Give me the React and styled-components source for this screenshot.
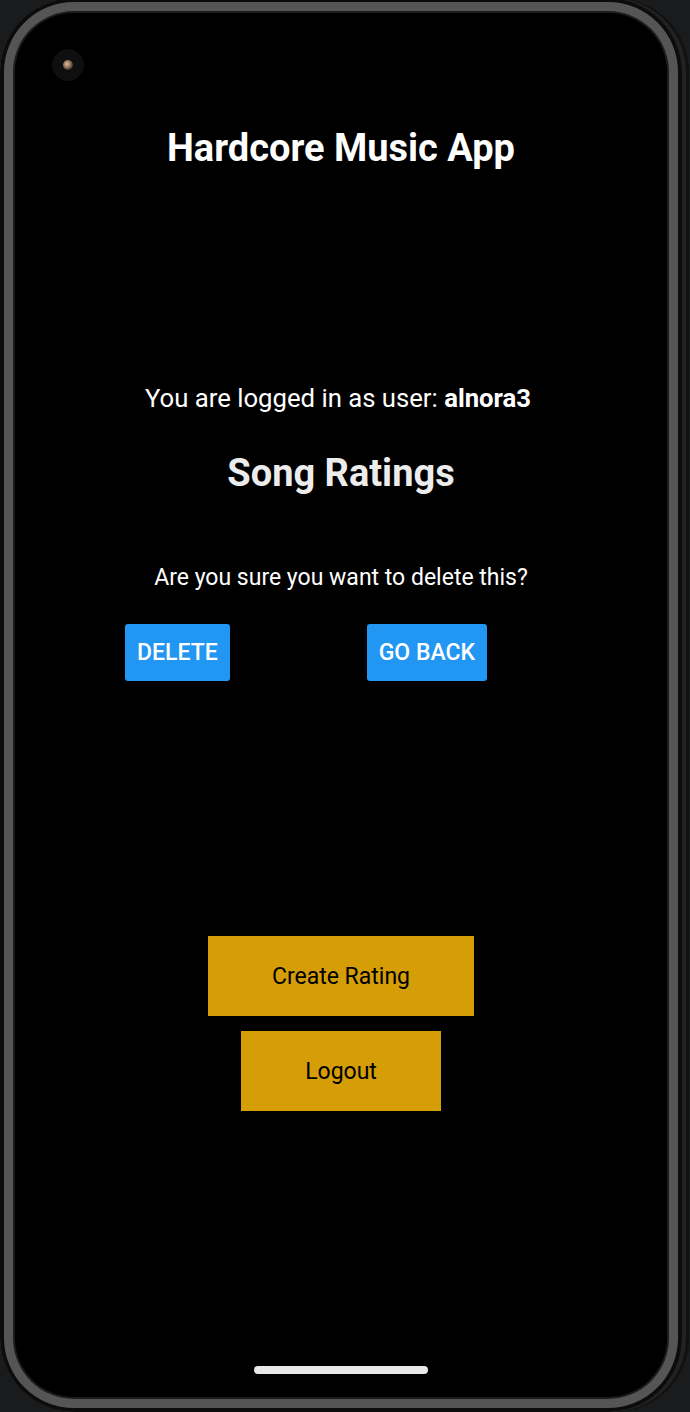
import React from "react";
import styled, { createGlobalStyle } from "styled-components";

const GlobalStyle = createGlobalStyle`
  html, body {
    margin: 0;
    padding: 0;
    background: #1a1b1d;
    overflow: hidden;
  }
  body {
    font-family: Roboto, "Liberation Sans", sans-serif;
  }
`;

const Desk = styled.div`
  width: 690px;
  height: 1412px;
  box-sizing: border-box;
  overflow: hidden;
`;

const Phone = styled.div`
  position: relative;
  margin-top: -2px;
  width: 682px;
  height: 1414px;
  border-radius: 74px;
  background: #000;
  box-shadow: inset 0 0 0 4px #0c0c0c, inset 0 0 0 13px #555,
    inset 0 0 0 15px #1c1c1c, 4px 0 0 #222, 7px 0 0 #111;
  display: flex;
  flex-direction: column;
  align-items: center;
  box-sizing: border-box;
  padding-top: 128px;
`;

const Camera = styled.div`
  position: absolute;
  left: 52px;
  top: 51px;
  width: 32px;
  height: 32px;
  border-radius: 50%;
  background: #0f0f0f;
  display: flex;
  align-items: center;
  justify-content: center;

  &::after {
    content: "";
    width: 10px;
    height: 10px;
    border-radius: 50%;
    background: radial-gradient(circle at 40% 40%, #e0c0a0 0, #8a6a50 45%, #2a1e18 80%);
  }
`;

const Title = styled.h1`
  margin: 0;
  font-size: 38px;
  line-height: 44px;
  font-weight: 700;
  color: #fff;
`;

const UserLine = styled.p`
  margin: 213px 6px 0 0;
  font-size: 25.7px;
  line-height: 30px;
  color: #fff;

  b {
    font-weight: 700;
  }
`;

const Heading = styled.h2`
  margin: 38px 0 0;
  font-size: 38px;
  line-height: 44px;
  font-weight: 700;
  color: #ececec;
`;

const Prompt = styled.p`
  margin: 69px 0 0;
  font-size: 23px;
  line-height: 28px;
  color: #fff;
`;

const ButtonRow = styled.div`
  align-self: stretch;
  display: flex;
  gap: 137px;
  margin-top: 32px;
  padding-left: 125px;
`;

const BlueButton = styled.button`
  height: 57px;
  padding: 0 12px;
  border: none;
  border-radius: 3px;
  background: #2196f3;
  color: #fff;
  font-family: Roboto, "Liberation Sans", sans-serif;
  font-size: 23px;
  font-weight: 500;
`;

const GoldButton = styled.button`
  width: ${(p) => p.$w}px;
  height: 80px;
  margin-top: ${(p) => p.$mt}px;
  border: none;
  background: #d59e07;
  color: #000;
  font-family: Roboto, "Liberation Sans", sans-serif;
  font-size: 23px;
`;

const HomeBar = styled.div`
  margin-top: 255px;
  width: 174px;
  height: 8px;
  border-radius: 4px;
  background: #e8e8e8;
`;

export default function App() {
  return (
    <>
      <GlobalStyle />
      <Desk>
        <Phone>
          <Camera />
          <Title>Hardcore Music App</Title>
          <UserLine>
            You are logged in as user: <b>alnora3</b>
          </UserLine>
          <Heading>Song Ratings</Heading>
          <Prompt>Are you sure you want to delete this?</Prompt>
          <ButtonRow>
            <BlueButton>DELETE</BlueButton>
            <BlueButton>GO BACK</BlueButton>
          </ButtonRow>
          <GoldButton $w={266} $mt={255}>Create Rating</GoldButton>
          <GoldButton $w={200} $mt={15}>Logout</GoldButton>
          <HomeBar />
        </Phone>
      </Desk>
    </>
  );
}
